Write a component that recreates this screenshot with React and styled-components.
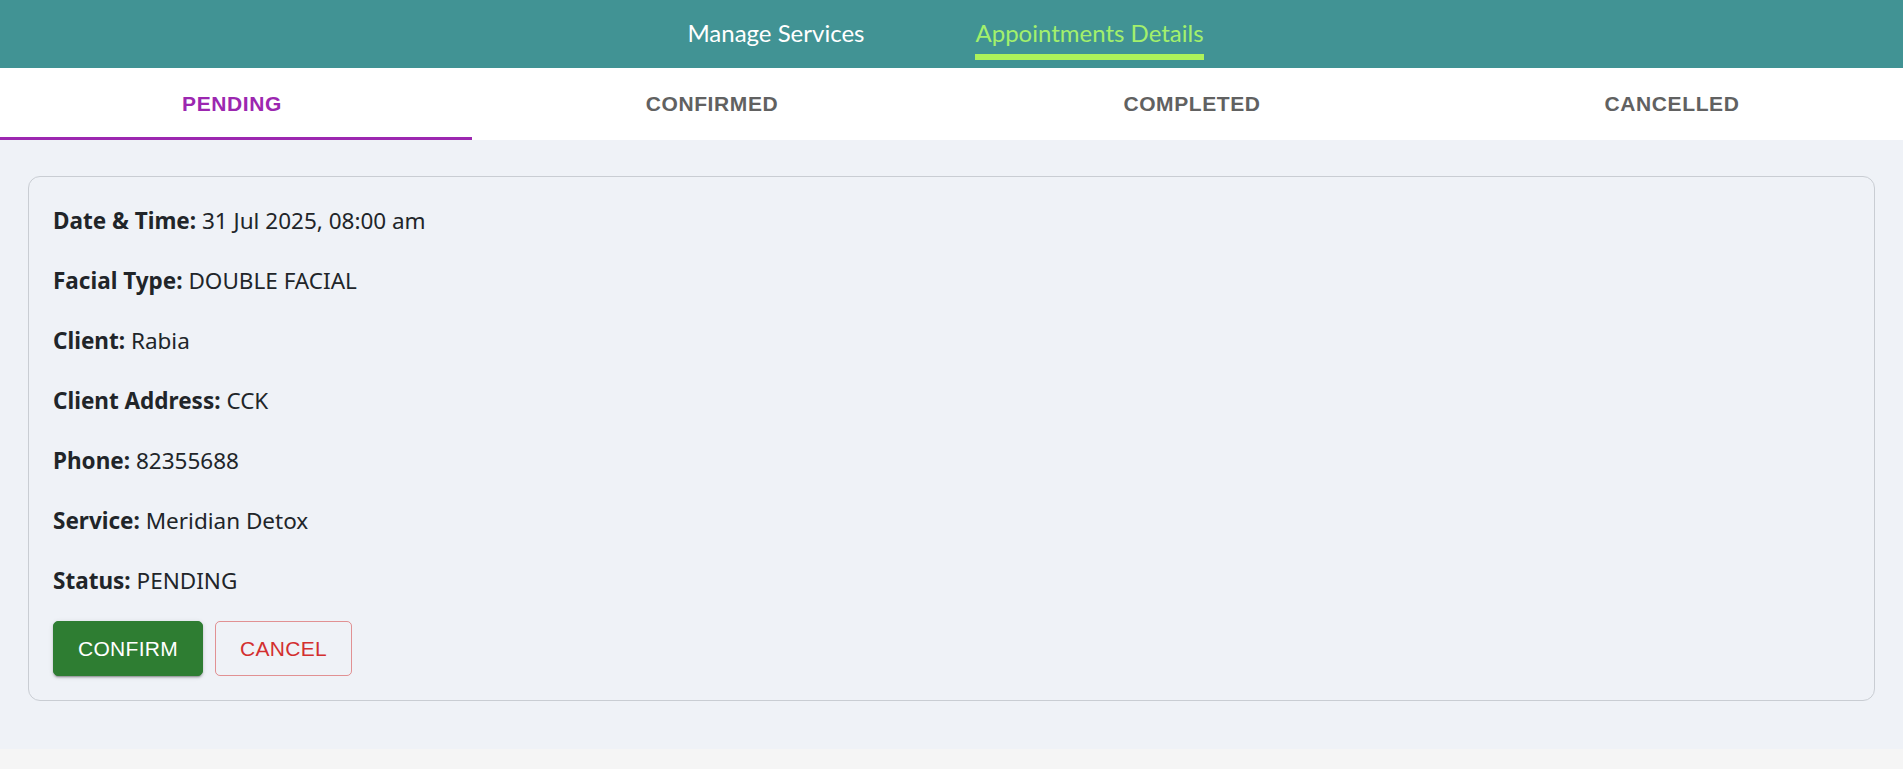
import styled, { createGlobalStyle } from 'styled-components';

const GlobalStyle = createGlobalStyle`
  html, body {
    margin: 0;
    padding: 0;
    background: #f5f5f5;
    font-family: "Noto Sans", sans-serif;
  }
`;

const TopBar = styled.nav`
  box-sizing: border-box;
  height: 68px;
  padding: 0 12px 8px 0;
  background: #419394;
  display: flex;
  justify-content: center;
  gap: 111px;
`;

const NavLink = styled.a`
  box-sizing: border-box;
  height: 60px;
  padding-top: 17px;
  line-height: 32px;
  font-family: Lato, "Noto Sans", sans-serif;
  font-size: 24px;
  color: ${(p) => (p.$active ? '#a3f06c' : '#ffffff')};
  border-bottom: 6px solid ${(p) => (p.$active ? '#adf25a' : 'transparent')};
  text-decoration: none;
  cursor: pointer;
`;

const TabBar = styled.div`
  background: #ffffff;
  height: 72px;
  overflow: hidden;
`;

const TabTrack = styled.div`
  display: flex;
  height: 100%;
  margin-left: -8px;
`;

const Tab = styled.button`
  flex: 0 0 480px;
  border: none;
  background: none;
  box-sizing: border-box;
  border-bottom: 3px solid ${(p) => (p.$active ? '#9c27b0' : 'transparent')};
  padding: 3px 0 0;
  font-family: "Liberation Sans", Arial, sans-serif;
  font-weight: 700;
  font-size: 21px;
  letter-spacing: 0.6px;
  color: ${(p) => (p.$active ? '#9c27b0' : '#616161')};
  cursor: pointer;
`;

const Main = styled.main`
  background: #eff2f7;
  padding: 36px 28px 48px;
`;

const Card = styled.section`
  border: 1px solid #c9cdd3;
  border-radius: 12px;
  padding: 24px;
  display: flex;
  flex-direction: column;
  gap: 20px;
`;

const Row = styled.div`
  font-size: 22.5px;
  line-height: 40px;
  color: #212529;
`;

const Label = styled.strong`
  font-weight: 700;
`;

const Actions = styled.div`
  display: flex;
  gap: 12px;
`;

const Button = styled.button`
  box-sizing: border-box;
  height: 55px;
  padding: 0 24px;
  font-family: "Liberation Sans", Arial, sans-serif;
  font-size: 21px;
  letter-spacing: 0.3px;
  border-radius: 5px;
  cursor: pointer;
  background: ${(p) => (p.$variant === 'confirm' ? '#2e7d32' : 'transparent')};
  color: ${(p) => (p.$variant === 'confirm' ? '#ffffff' : '#d32f2f')};
  border: 1px solid ${(p) => (p.$variant === 'confirm' ? '#2e7d32' : 'rgba(211, 47, 47, 0.5)')};
  box-shadow: ${(p) =>
    p.$variant === 'confirm'
      ? '0 3px 1px -2px rgba(0,0,0,0.2), 0 2px 2px 0 rgba(0,0,0,0.14), 0 1px 5px 0 rgba(0,0,0,0.12)'
      : 'none'};
`;

const details = [
  ['Date & Time:', '31 Jul 2025, 08:00 am'],
  ['Facial Type:', 'DOUBLE FACIAL'],
  ['Client:', 'Rabia'],
  ['Client Address:', 'CCK'],
  ['Phone:', '82355688'],
  ['Service:', 'Meridian Detox'],
  ['Status:', 'PENDING'],
];

const tabs = ['PENDING', 'CONFIRMED', 'COMPLETED', 'CANCELLED'];

const App = () => {
  return (
    <>
      <GlobalStyle />
      <TopBar>
        <NavLink>Manage Services</NavLink>
        <NavLink $active>Appointments Details</NavLink>
      </TopBar>
      <TabBar>
        <TabTrack>
          {tabs.map((t, i) => (
            <Tab key={t} $active={i === 0}>{t}</Tab>
          ))}
        </TabTrack>
      </TabBar>
      <Main>
        <Card>
          {details.map(([label, value]) => (
            <Row key={label}>
              <Label>{label}</Label> {value}
            </Row>
          ))}
          <Actions>
            <Button $variant="confirm">CONFIRM</Button>
            <Button $variant="cancel">CANCEL</Button>
          </Actions>
        </Card>
      </Main>
    </>
  );
};

export default App;
